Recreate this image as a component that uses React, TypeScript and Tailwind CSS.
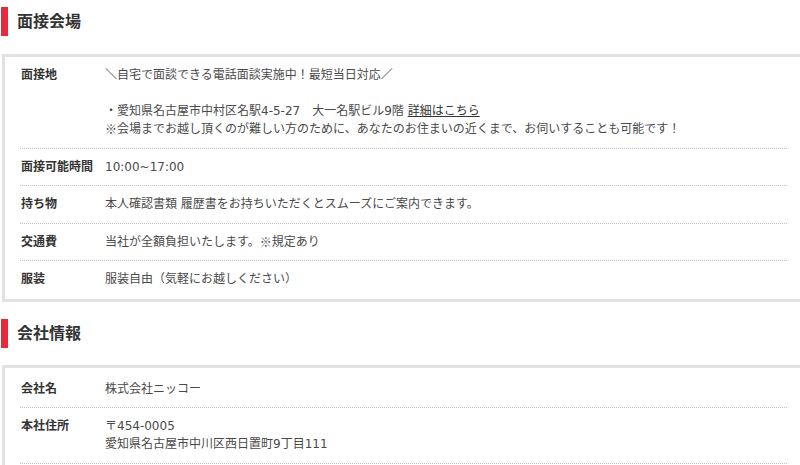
import React from "react";

const font = { fontFamily: '"DejaVu Sans", "Noto Sans CJK JP", sans-serif' };

function Mark() {
  return (
    <span
      className="inline-block h-[18px] leading-[18px] align-top"
      style={{ fontFamily: '"Noto Sans CJK JP", sans-serif' }}
    >
      ※
    </span>
  );
}

function Heading({ title }: { title: string }) {
  return (
    <div className="flex items-center h-[29px] pl-[1px]">
      <div className="w-[7px] h-[29px] bg-[#e8293b]" />
      <h2 className="ml-[9px] text-[16px] font-bold text-[#333] leading-[29px]">{title}</h2>
    </div>
  );
}

function Row({ label, children, last }: { label: string; children: React.ReactNode; last?: boolean }) {
  return (
    <div
      className={`flex pt-[9px] pb-[9.5px] ${last ? "" : "border-b border-dotted border-[#c2c2c2]"}`}
    >
      <div className="w-[85px] shrink-0 pl-[1px] text-[12px] leading-[18px] font-bold text-[#333]">{label}</div>
      <div className="flex-1 text-[12px] leading-[18px] text-[#4a4a4a]">{children}</div>
    </div>
  );
}

function Box({ children }: { children: React.ReactNode }) {
  return (
    <div className="ml-[2px] w-[803px] border-[3px] border-[#e2e2e2] bg-white pl-[15px] pr-[15px] pb-[1px]">
      {children}
    </div>
  );
}

export default function App() {
  return (
    <div className="w-[800px] h-[465px] overflow-hidden bg-white" style={font}>
      <div className="pt-[7px]">
        <Heading title="面接会場" />
        <div className="mt-[18px]">
          <Box>
            <Row label="面接地">
              <div>＼自宅で面談できる電話面談実施中！最短当日対応／</div>
              <div>&nbsp;</div>
              <div>
                ・愛知県名古屋市中村区名駅4-5-27　大一名駅ビル9階{" "}
                <span className="underline text-[#333]">詳細はこちら</span>
              </div>
              <div>
                <Mark />
                会場までお越し頂くのが難しい方のために、あなたのお住まいの近くまで、お伺いすることも可能です！
              </div>
            </Row>
            <Row label="面接可能時間">10:00~17:00</Row>
            <Row label="持ち物">本人確認書類 履歴書をお持ちいただくとスムーズにご案内できます。</Row>
            <Row label="交通費">
              当社が全額負担いたします。
              <Mark />
              規定あり
            </Row>
            <Row label="服装" last>
              服装自由（気軽にお越しください）
            </Row>
          </Box>
        </div>
        <div className="mt-[17px]">
          <Heading title="会社情報" />
        </div>
        <div className="mt-[17px]">
          <Box>
            <div className="pt-[3px]">
              <Row label="会社名">株式会社ニッコー</Row>
              <Row label="本社住所">
                <div>〒454-0005</div>
                <div>愛知県名古屋市中川区西日置町9丁目111</div>
              </Row>
            </div>
          </Box>
        </div>
      </div>
    </div>
  );
}
